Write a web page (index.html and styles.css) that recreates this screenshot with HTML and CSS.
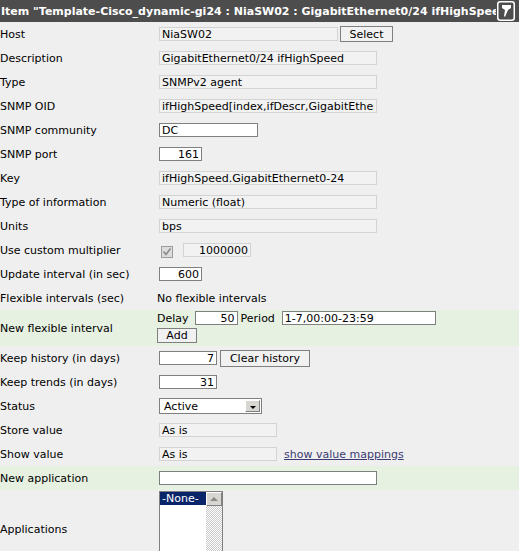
FILE: index.html
```html
<!DOCTYPE html>
<html lang="en">
<head>
    <meta charset="UTF-8">
    <title>Item - NiaSW02 : GigabitEthernet0/24 ifHighSpeed</title>
    <link rel="stylesheet" href="styles.css">
</head>
<body>
    <div class="head">
        <span class="head-title">Item "Template-Cisco_dynamic-gi24 : NiaSW02 : GigabitEthernet0/24 ifHighSpeed"</span>
        <svg class="head-pin" viewBox="0 0 18 20" width="18" height="20">
            <rect x="0.75" y="0.75" width="16.5" height="18.5" rx="2.5" fill="#4d4d4d" stroke="#fff" stroke-width="1.5"/>
            <polygon points="5,4 14,4 14,7 11,9 8,16 7,15 8,9 5,7" fill="#fff"/>
        </svg>
    </div>

    <table class="form">
        <tr>
            <td class="lbl">Host</td>
            <td><div class="fld"><input class="txt ro w179" value="NiaSW02" readonly><button class="btn w53">Select</button></div></td>
        </tr>
        <tr>
            <td class="lbl">Description</td>
            <td><div class="fld"><input class="txt ro w218" value="GigabitEthernet0/24 ifHighSpeed" readonly></div></td>
        </tr>
        <tr>
            <td class="lbl">Type</td>
            <td><div class="fld"><input class="txt ro w218" value="SNMPv2 agent" readonly></div></td>
        </tr>
        <tr>
            <td class="lbl">SNMP OID</td>
            <td><div class="fld"><input class="txt ro w218" value="ifHighSpeed[index,ifDescr,GigabitEthernet0/24]" readonly></div></td>
        </tr>
        <tr>
            <td class="lbl">SNMP community</td>
            <td><div class="fld"><input class="txt w99" value="DC"></div></td>
        </tr>
        <tr>
            <td class="lbl">SNMP port</td>
            <td><div class="fld"><input class="txt num w43" value="161"></div></td>
        </tr>
        <tr>
            <td class="lbl">Key</td>
            <td><div class="fld"><input class="txt ro w218" value="ifHighSpeed.GigabitEthernet0-24" readonly></div></td>
        </tr>
        <tr>
            <td class="lbl">Type of information</td>
            <td><div class="fld"><input class="txt ro w218" value="Numeric (float)" readonly></div></td>
        </tr>
        <tr>
            <td class="lbl">Units</td>
            <td><div class="fld"><input class="txt ro w218" value="bps" readonly></div></td>
        </tr>
        <tr>
            <td class="lbl">Use custom multiplier</td>
            <td>
                <div class="fld">
                    <span class="check">
                        <svg viewBox="0 0 12 12" width="12" height="12"><path d="M2.5 5.5 L5 8.5 L9.5 2.5" fill="none" stroke="#8a8a8a" stroke-width="1.6"/></svg>
                    </span>
                    <input class="txt ro num w68" value="1000000" readonly>
                </div>
            </td>
        </tr>
        <tr>
            <td class="lbl">Update interval (in sec)</td>
            <td><div class="fld"><input class="txt num w43" value="600"></div></td>
        </tr>
        <tr>
            <td class="lbl">Flexible intervals (sec)</td>
            <td><div class="fld">No flexible intervals</div></td>
        </tr>
        <tr class="row-new row-flex">
            <td class="lbl">New flexible interval</td>
            <td>
                <div class="fld">
                    <span>Delay</span>
                    <input class="txt num w43 gap-delay" value="50">
                    <span class="gap-period">Period</span>
                    <input class="txt w154 gap-period-in" value="1-7,00:00-23:59">
                </div>
                <button class="btn btn-add">Add</button>
            </td>
        </tr>
        <tr>
            <td class="lbl">Keep history (in days)</td>
            <td><div class="fld"><input class="txt num w58" value="7"><button class="btn btn-clear">Clear history</button></div></td>
        </tr>
        <tr>
            <td class="lbl">Keep trends (in days)</td>
            <td><div class="fld"><input class="txt num w58" value="31"></div></td>
        </tr>
        <tr>
            <td class="lbl">Status</td>
            <td>
                <div class="fld">
                    <div class="combo">
                        <span class="combo-text">Active</span>
                        <span class="combo-btn"><span class="tri-down"></span></span>
                    </div>
                </div>
            </td>
        </tr>
        <tr>
            <td class="lbl">Store value</td>
            <td><div class="fld"><input class="txt ro w118" value="As is" readonly></div></td>
        </tr>
        <tr>
            <td class="lbl">Show value</td>
            <td><div class="fld"><input class="txt ro w118" value="As is" readonly><a class="map-link" href="#">show value mappings</a></div></td>
        </tr>
        <tr class="row-new">
            <td class="lbl">New application</td>
            <td><div class="fld"><input class="txt w218" value=""></div></td>
        </tr>
        <tr class="row-apps">
            <td class="lbl">Applications</td>
            <td>
                <div class="fld">
                    <div class="listbox">
                        <div class="listbox-items">
                            <div class="opt opt-sel">-None-</div>
                        </div>
                        <div class="scroll">
                            <span class="scroll-up"><span class="tri-up"></span></span>
                        </div>
                    </div>
                </div>
            </td>
        </tr>
    </table>
</body>
</html>
```

FILE: styles.css
```css
body {
    margin: 0;
    background: #efefef;
    color: #000;
    font-family: "DejaVu Sans", Verdana, sans-serif;
    font-size: 11px;
}

/* title bar */
.head {
    display: flex;
    align-items: center;
    height: 22px;
    background: #4d4d4d;
    color: #fff;
}
.head-title {
    flex: 1;
    min-width: 0;
    overflow: hidden;
    white-space: nowrap;
    font-weight: bold;
    padding-left: 1px;
}
.head-pin {
    flex: none;
    margin: 0 4px 0 1px;
}

/* form table */
.form {
    border-collapse: collapse;
    width: 100%;
}
.form td {
    padding: 0;
    height: 24px;
    vertical-align: middle;
}
.form .lbl {
    width: 157px;
    white-space: nowrap;
}
.row-new td {
    background: #e6f1e1;
}
.row-flex td {
    height: 35px;
}
.row-flex td:last-child {
    vertical-align: top;
    padding-top: 1px;
}
.row-apps td {
    height: 78px;
}

.fld {
    display: flex;
    align-items: center;
    white-space: nowrap;
}

/* inputs */
.txt {
    box-sizing: border-box;
    height: 14px;
    margin: 0 0 0 2px;
    padding: 0 2px;
    border: 1px solid #7f7f7f;
    background: #fff;
    color: #000;
    font: inherit;
    line-height: 12px;
    outline: none;
}
.ro {
    border-color: #d3d3d3;
    background: #f2f2f2;
}
.num {
    text-align: right;
}
.w43 { width: 43px; }
.w58 { width: 58px; }
.w68 { width: 68px; }
.w99 { width: 99px; }
.w118 { width: 118px; }
.w154 { width: 154px; }
.w179 { width: 179px; }
.w218 { width: 218px; }

.gap-delay { margin-left: 6px; }
.gap-period { margin-left: 3px; }
.gap-period-in { margin-left: 7px; }

/* buttons */
.btn {
    box-sizing: border-box;
    height: 16px;
    margin: 0 0 0 2px;
    padding: 0;
    border: 1px solid #7f7f7f;
    background: #f1f1f1;
    color: #000;
    font: inherit;
    line-height: 13px;
}
.w53 { width: 53px; }
.btn-add {
    display: block;
    width: 40px;
    height: 15px;
    margin: 3px 0 0 0;
}
.btn-clear {
    width: 90px;
    height: 17px;
    margin-left: 3px;
}

/* disabled checkbox */
.check {
    box-sizing: border-box;
    width: 12px;
    height: 12px;
    margin: 3px 8px 0 4px;
    border: 1px solid #9c9c9c;
    background: #dcdcdc;
    display: flex;
}
.check svg {
    margin: -1px;
}

/* dropdown */
.combo {
    box-sizing: border-box;
    display: flex;
    width: 103px;
    height: 16px;
    margin-left: 2px;
    padding: 1px;
    border: 1px solid #7f7f7f;
    background: #fff;
}
.combo-text {
    flex: 1;
    padding-left: 3px;
    line-height: 13px;
}
.combo-btn {
    box-sizing: border-box;
    width: 15px;
    display: flex;
    align-items: center;
    justify-content: center;
    background: #d8d6d0;
    border: 1px solid;
    border-color: #fff #808080 #808080 #fff;
}
.tri-down {
    width: 0;
    height: 0;
    border-left: 3px solid transparent;
    border-right: 3px solid transparent;
    border-top: 3px solid #000;
    margin-top: 2px;
}

.map-link {
    margin-left: 7px;
    color: #3b3b73;
    text-decoration: underline;
}

/* applications list */
.listbox {
    box-sizing: border-box;
    display: flex;
    width: 64px;
    height: 76px;
    margin-left: 2px;
    border: 1px solid #808080;
    background: #fff;
}
.listbox-items {
    flex: 1;
}
.opt {
    height: 13px;
    line-height: 13px;
    padding-left: 2px;
}
.opt-sel {
    background: #0a246a;
    color: #fff;
}
.scroll {
    width: 16px;
    background: repeating-conic-gradient(#c8c8c8 0 25%, #fff 0 50%) 0 0 / 2px 2px;
}
.scroll-up {
    box-sizing: border-box;
    display: flex;
    align-items: center;
    justify-content: center;
    height: 14px;
    background: #d8d6d0;
    border: 1px solid;
    border-color: #fff #808080 #808080 #fff;
}
.tri-up {
    width: 0;
    height: 0;
    border-left: 4px solid transparent;
    border-right: 4px solid transparent;
    border-bottom: 4px solid #8a8a8a;
}
```
